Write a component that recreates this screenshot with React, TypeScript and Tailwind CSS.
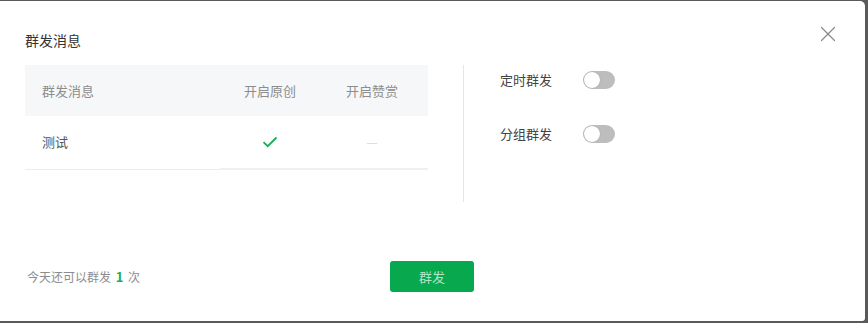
import { X } from 'lucide-react';

function Toggle() {
  return (
    <div className="relative h-[18px] w-[32px] rounded-full bg-[#bdbdbd]">
      <div className="absolute left-[1px] top-[1px] h-[16px] w-[16px] rounded-full bg-white shadow-[0_0_1px_rgba(0,0,0,0.3)]" />
    </div>
  );
}

export default function App() {
  return (
    <div
      className="h-[323px] w-[868px] bg-[#5a5a5a] pt-px"
      style={{ fontFamily: '"Noto Sans CJK SC", "Noto Sans", sans-serif' }}
    >
      <div className="relative h-[320px] w-[865px] rounded-tr-[5px] rounded-br-[3px] bg-white">
        <button className="absolute right-[24px] top-[20px] text-[#8a8a8a]">
          <X className="h-[26px] w-[26px]" strokeWidth={1.1} />
        </button>
        <h2 className="pl-[25px] pt-[29px] text-[14px] leading-[20px] text-[#333]">群发消息</h2>

        <div className="mt-[15px] flex">
          <div className="w-[428px] pl-[25px] text-[13px]">
            <div className="flex h-[51px] items-center bg-[#f6f7f9] text-[#8d8d8d]">
              <div className="w-[195px] pl-[17px]">群发消息</div>
              <div className="w-[100px] text-center">开启原创</div>
              <div className="w-[108px] pr-[4px] text-center">开启赞赏</div>
            </div>
            <div className="flex h-[54px] text-[#555]">
              <div className="flex w-[195px] items-center border-b border-[#ececec] pl-[17px] pb-[2px]">测试</div>
              <div className="flex w-[100px] items-center justify-center border-b-[2px] border-[#efefef]">
                <svg width="16" height="12" viewBox="0 0 16 12" fill="none">
                  <path d="M1.5 6.2l4.2 4 8.8-8.7" stroke="#1aad55" strokeWidth="1.8" />
                </svg>
              </div>
              <div className="flex w-[108px] items-center justify-center border-b-[2px] border-[#efefef] pr-[4px] text-[#d8d8d8]">
                —
              </div>
            </div>
          </div>

          <div className="ml-[35px] h-[137px] w-px bg-[#e6e6e6]" />

          <div className="ml-[36px] pt-[6px] text-[13px] text-[#444]">
            <div className="flex h-[18px] items-center">
              <span className="w-[83px]">定时群发</span>
              <Toggle />
            </div>
            <div className="mt-[36px] flex h-[18px] items-center">
              <span className="w-[83px]">分组群发</span>
              <Toggle />
            </div>
          </div>
        </div>

        <div className="mt-[59px] flex items-center">
          <div className="w-[390px] pl-[27px] text-[12px] text-[#8d8d8d]">
            今天还可以群发 <span className="mx-[2px] text-[13px] font-bold text-[#1aad55]">1</span> 次
          </div>
          <button className="h-[31px] w-[84px] rounded-[3px] bg-[#07a84e] text-[13px] text-white/70">群发</button>
        </div>
      </div>
    </div>
  );
}
